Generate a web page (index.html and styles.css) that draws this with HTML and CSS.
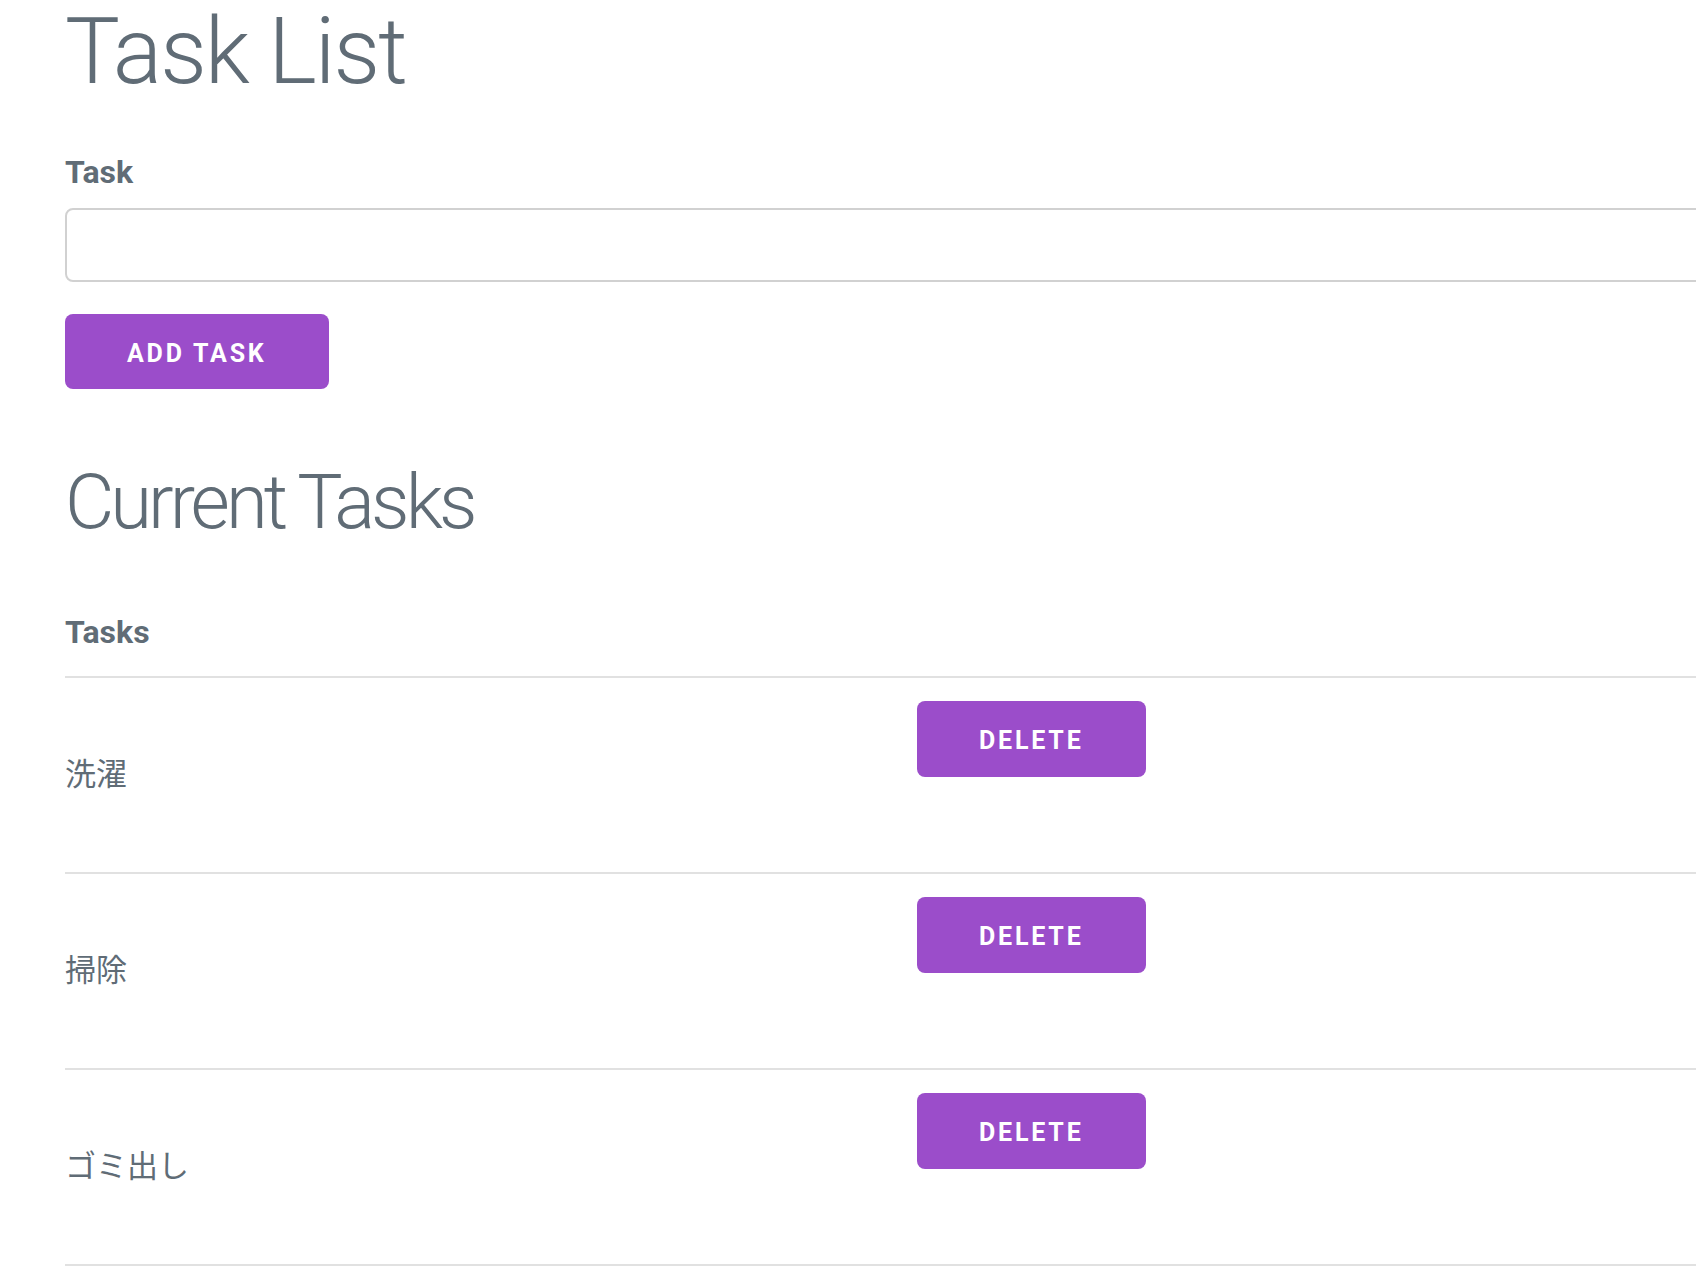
FILE: index.html
```html
<!DOCTYPE html>
<html lang="ja">
<head>
<meta charset="utf-8">
<title>Task List</title>
<link rel="stylesheet" href="styles.css">
</head>
<body>
<div class="container">
  <h1 class="title">Task List</h1>
  <form class="task-form">
    <label class="field-label" for="task-name">Task</label>
    <input id="task-name" class="field-input" type="text">
    <button class="button" type="button">Add Task</button>
  </form>
  <h2 class="subtitle">Current Tasks</h2>
  <table class="task-table">
    <thead>
      <tr><th class="col-name">Tasks</th><th class="col-action"></th></tr>
    </thead>
    <tbody>
      <tr><td class="task-name">洗濯</td><td class="task-action"><button class="button" type="button">Delete</button></td></tr>
      <tr><td class="task-name">掃除</td><td class="task-action"><button class="button" type="button">Delete</button></td></tr>
      <tr><td class="task-name">ゴミ出し</td><td class="task-action"><button class="button" type="button">Delete</button></td></tr>
    </tbody>
  </table>
</div>
</body>
</html>
```
FILE: styles.css
```css
html, body {
  margin: 0;
  padding: 0;
  overflow: hidden;
  background: #fff;
}
body {
  font-family: Roboto, "Noto Sans CJK JP", sans-serif;
  color: #606c76;
}
.container {
  width: 1800px;
  padding-left: 65px;
}
.title {
  margin: 0;
  font-size: 92px;
  font-weight: 300;
  letter-spacing: -2px;
  line-height: 104px;
}
.task-form {
  display: flex;
  flex-direction: column;
  align-items: flex-start;
  margin: 0;
}
.field-label {
  display: block;
  margin-top: 43px;
  margin-bottom: 10px;
  font-size: 32px;
  font-weight: 700;
  line-height: 51px;
}
.field-input {
  box-sizing: border-box;
  width: 100%;
  height: 74px;
  margin: 0 0 32px 0;
  border: 2px solid #d1d1d1;
  border-radius: 8px;
  background: #fff;
}
.button {
  box-sizing: border-box;
  height: 75px;
  padding: 3px 62px 0 62px;
  border: none;
  border-radius: 8px;
  background: #9b4dca;
  color: #fff;
  font-family: Roboto, sans-serif;
  font-size: 25px;
  font-weight: 700;
  letter-spacing: 2.8px;
  text-transform: uppercase;
}
.subtitle {
  margin: 65px 0 0 0;
  font-size: 76px;
  font-weight: 300;
  letter-spacing: -4px;
  line-height: 96px;
}
.task-table {
  margin-top: 57px;
  width: 100%;
  border-collapse: collapse;
}
.task-table th {
  text-align: left;
  padding: 0 0 18px 0;
  font-size: 32px;
  font-weight: 700;
  line-height: 51px;
  border-bottom: 2px solid #e1e1e1;
}
.col-name {
  width: 852px;
}
.task-table td {
  padding: 0;
  border-bottom: 2px solid #e1e1e1;
}
.task-name {
  vertical-align: middle;
  font-family: "Noto Sans CJK JP", sans-serif;
  font-size: 31px;
  font-weight: 400;
  height: 186px;
  padding-bottom: 8px !important;
}
.task-action {
  vertical-align: top;
}
.task-action .button {
  margin-top: 23px;
  height: 76px;
}
```
